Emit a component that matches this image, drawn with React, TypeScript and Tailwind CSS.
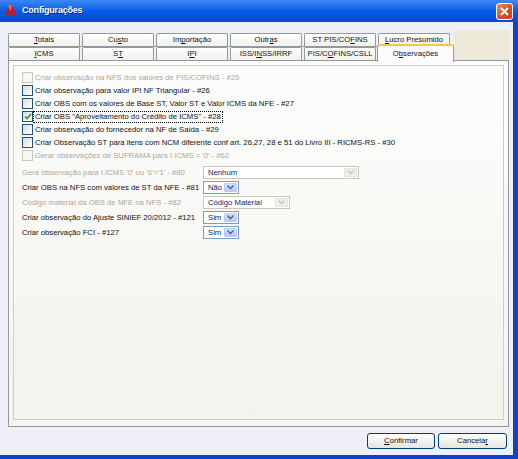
import React from "react";

type Opt = { label: string; disabled?: boolean; checked?: boolean; focus?: boolean };

const checks: Opt[] = [
  { label: "Criar observação na NFS dos valores de PIS/COFINS - #25", disabled: true },
  { label: "Criar observação para valor IPI NF Triangular - #26" },
  { label: "Criar OBS com os valores de Base ST, Valor ST e Valor ICMS da NFE - #27" },
  { label: 'Criar OBS "Aproveitamento do Crédito de ICMS" - #28', checked: true, focus: true },
  { label: "Criar observação do fornecedor na NF de Saída - #29" },
  {
    label:
      "Criar Observação ST para itens com NCM diferente conf art. 26,27, 28 e 51 do Livro III - RICMS-RS - #30",
  },
  { label: "Gerar observações de SUFRAMA para I.ICMS = '0' - #62", disabled: true },
];

const combos = [
  { label: "Gera observação para I.ICMS '0' ou '6'='1' - #80", value: "Nenhum", width: "w-[156px]", disabled: true },
  { label: "Criar OBS na NFS com valores de ST da NFE - #81", value: "Não", width: "w-[36px]" },
  { label: "Código material da OBS de NFE na NFS - #82", value: "Código Material", width: "w-[87px]", disabled: true },
  { label: "Criar observação do Ajuste SINIEF 20/2012 - #121", value: "Sim", width: "w-[36px]" },
  { label: "Criar observação FCI - #127", value: "Sim", width: "w-[36px]" },
];

// label text with one underlined (mnemonic) letter
const Mn = ({ text, at }: { text: string; at: number }) => (
  <span>
    {text.slice(0, at)}
    <span className="underline">{text[at]}</span>
    {text.slice(at + 1)}
  </span>
);

const Tab = ({ text, at }: { text: string; at: number }) => (
  <div className="w-[72px] h-full flex items-center justify-center border border-b-0 border-[#919B9C] rounded-t-[2px] bg-gradient-to-b from-white to-[#F1F0EA]">
    <Mn text={text} at={at} />
  </div>
);

const Chevron = ({ color }: { color: string }) => (
  <svg width="7" height="5" viewBox="0 0 7 5">
    <path d="M0.5 0.5 L3.5 3.5 L6.5 0.5" fill="none" stroke={color} strokeWidth="1.4" />
  </svg>
);

const CheckBox = ({ disabled, checked }: { disabled?: boolean; checked?: boolean }) => (
  <div
    className={
      "w-[11px] h-[11px] shrink-0 border flex items-center justify-center " +
      (disabled ? "border-[#CAC8BB] bg-[#F7F7F4]" : "border-[#1C5180] bg-gradient-to-br from-[#DCDCD7] to-white")
    }
  >
    {checked && (
      <svg width="8" height="7" viewBox="0 0 8 7">
        <path d="M1 3.5 L3 5.5 L7 1" fill="none" stroke="#21A121" strokeWidth="1.6" />
      </svg>
    )}
  </div>
);

export default function App() {
  return (
    <div className="w-[518px] h-[459px] flex flex-col bg-[#0842D6] font-['Liberation_Sans',sans-serif] text-[7.7px] text-[#111] overflow-hidden">
      {/* Title bar */}
      <div className="h-[22px] shrink-0 flex items-center bg-gradient-to-b from-[#3A87F5] via-[#0A5CE6] to-[#0049D6] pl-[3px] pr-[5px]">
        <svg width="14" height="14" viewBox="0 0 14 14">
          <path d="M2 13 L5 2 Q7 0 9 2 L13 11 Q10 13 7 10 Z" fill="#C81818" />
          <path d="M5 2 Q7 0 9 2 L8 7 Q6 5 5 2 Z" fill="#F06060" />
        </svg>
        <span className="ml-[5px] text-white font-bold text-[9px] tracking-[-0.2px] [text-shadow:1px_1px_0_#0A1E8C]">Configurações</span>
        <div className="ml-auto w-[17px] h-[17px] rounded-[3px] border border-white bg-gradient-to-br from-[#F08A6A] via-[#E0522E] to-[#C53A18] flex items-center justify-center">
          <svg width="9" height="9" viewBox="0 0 9 9">
            <path d="M1 1 L8 8 M8 1 L1 8" stroke="white" strokeWidth="1.8" />
          </svg>
        </div>
      </div>

      {/* Client area */}
      <div className="flex-1 flex flex-col bg-[#EEEFF7] mr-[5px] mb-[4px]">
        <div className="h-[8px] shrink-0" />

        {/* Tab control */}
        <div className="ml-[8px] w-[501px] flex flex-col">
          <div className="h-[30px] flex">
            <div className="pt-[3px] flex flex-col">
              <div className="h-[13px] flex gap-[2px]">
                <Tab text="Totais" at={0} />
                <Tab text="Custo" at={2} />
                <Tab text="Importação" at={2} />
                <Tab text="Outras" at={4} />
                <Tab text="ST PIS/COFINS" at={9} />
                <Tab text="Lucro Presumido" at={0} />
              </div>
              <div className="h-[14px] flex gap-[2px] border-t border-[#919B9C]">
                <Tab text="ICMS" at={0} />
                <Tab text="ST" at={1} />
                <Tab text="IPI" at={1} />
                <Tab text="ISS/INSS/IRRF" at={5} />
                <Tab text="PIS/COFINS/CSLL" at={5} />
                <div className="relative z-10 -ml-[1px] -mt-[3px] w-[77px] h-[18px] flex items-center justify-center border border-b-0 border-[#919B9C] border-t-[2px] border-t-[#FFC83C] rounded-t-[3px] bg-[#FCFCFE]">
                  <Mn text="Observações" at={1} />
                </div>
              </div>
            </div>
            <div className="flex-1 bg-[#ECE9D8]" />
          </div>

          {/* Page */}
          <div className="h-[367px] border border-[#919B9C] bg-gradient-to-b from-[#FCFCFE] to-[#F4F3EE] p-[4px] pb-[6px]">
            <div className="h-full border border-[#D0D0BF] bg-gradient-to-b from-[#FDFDFD] to-[#F3F2EC] pt-[5px] pl-[8px]">
              <div className="flex flex-col">
                {checks.map((c, i) => (
                  <div key={i} className="h-[13px] flex items-center">
                    <CheckBox disabled={c.disabled} checked={c.checked} />
                    <span
                      className={
                        "px-[1px] leading-[10px] whitespace-nowrap " +
                        (c.focus ? "border border-dotted border-black " : "border border-transparent ") +
                        (c.disabled ? "text-[#ACA899]" : "text-[#111]")
                      }
                    >
                      {c.label}
                    </span>
                  </div>
                ))}
              </div>

              <div className="mt-[4px] flex flex-col gap-[2px]">
                {combos.map((c, i) => (
                  <div key={i} className="h-[13px] flex items-center">
                    <span className={"w-[181px] shrink-0 whitespace-nowrap " + (c.disabled ? "text-[#ACA899]" : "text-[#111]")}>
                      {c.label}
                    </span>
                    <div
                      className={
                        c.width +
                        " h-[13px] shrink-0 border bg-white flex items-center p-[1px] " +
                        (c.disabled ? "border-[#C9C7BA]" : "border-[#7F9DB9]")
                      }
                    >
                      <span className="flex-1 pl-[3px] text-[#10246A] whitespace-nowrap overflow-hidden">{c.value}</span>
                      <div
                        className={
                          "w-[13px] h-full rounded-[1px] flex items-center justify-center " +
                          (c.disabled ? "bg-[#F0EFE9] border border-[#E3E2DC]" : "bg-gradient-to-b from-[#D2E0FD] to-[#B3C9F5] border border-[#B8CCF5]")
                        }
                      >
                        <Chevron color={c.disabled ? "#C9C7BA" : "#4D6185"} />
                      </div>
                    </div>
                  </div>
                ))}
              </div>
            </div>
          </div>
        </div>

        {/* Buttons */}
        <div className="flex justify-end gap-[3px] pr-[6px] pt-[6px]">
          <button className="w-[68px] h-[16px] rounded-[3px] border border-[#003C74] bg-gradient-to-b from-white to-[#E6E5DE] flex items-center justify-center">
            <Mn text="Confirmar" at={0} />
          </button>
          <button className="w-[69px] h-[16px] rounded-[3px] border border-[#003C74] bg-gradient-to-b from-white to-[#E6E5DE] flex items-center justify-center">
            <Mn text="Cancelar" at={7} />
          </button>
        </div>
      </div>
    </div>
  );
}
